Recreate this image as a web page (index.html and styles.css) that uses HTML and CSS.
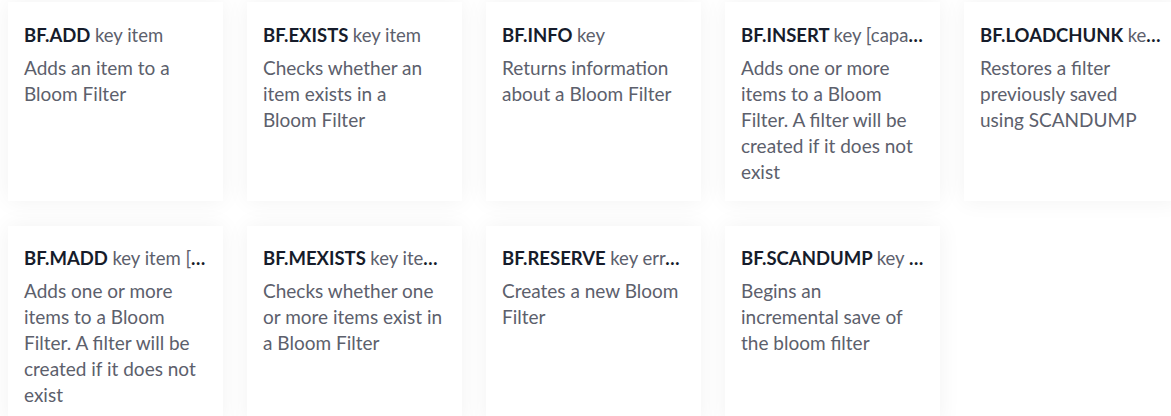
FILE: index.html
```html
<!DOCTYPE html>
<html>
<head>
<meta charset="utf-8">
<link rel="stylesheet" href="styles.css">
</head>
<body>
<div class="grid">
  <div class="card"><div class="title">BF.ADD <span class="args">key item</span></div><div class="desc">Adds an item to a Bloom Filter</div></div>
  <div class="card"><div class="title">BF.EXISTS <span class="args">key item</span></div><div class="desc">Checks whether an item exists in a Bloom Filter</div></div>
  <div class="card"><div class="title">BF.INFO <span class="args">key</span></div><div class="desc">Returns information about a Bloom Filter</div></div>
  <div class="card"><div class="title">BF.INSERT <span class="args">key [capacity] [error] [expansion] [nocreate] [nonscaling] items</span></div><div class="desc">Adds one or more items to a Bloom Filter. A filter will be created if it does not exist</div></div>
  <div class="card"><div class="title">BF.LOADCHUNK <span class="args">key iterator data</span></div><div class="desc">Restores a filter previously saved using SCANDUMP</div></div>
  <div class="card"><div class="title">BF.MADD <span class="args">key item [item ...]</span></div><div class="desc">Adds one or more items to a Bloom Filter. A filter will be created if it does not exist</div></div>
  <div class="card"><div class="title">BF.MEXISTS <span class="args">key item [item ...]</span></div><div class="desc">Checks whether one or more items exist in a Bloom Filter</div></div>
  <div class="card"><div class="title">BF.RESERVE <span class="args">key error_rate capacity [expansion] [nonscaling]</span></div><div class="desc">Creates a new Bloom Filter</div></div>
  <div class="card"><div class="title">BF.SCANDUMP <span class="args">key iterator</span></div><div class="desc">Begins an incremental save of the bloom filter</div></div>
</div>
</body>
</html>
```
FILE: styles.css
```css
html, body {
  margin: 0;
  padding: 0;
  background: #ffffff;
  overflow: hidden;
}
body {
  font-family: "Lato", "Liberation Sans", sans-serif;
}
.grid {
  display: grid;
  grid-template-columns: repeat(5, 215px);
  column-gap: 24px;
  row-gap: 25px;
  padding: 2px 0 0 8px;
  width: 1200px;
}
.card {
  background: #ffffff;
  box-shadow: 0 0 22px rgba(0, 0, 0, 0.055);
  padding: 19.5px 18px 16px 16px;
  min-width: 0;
}
.title {
  font-size: 18.5px;
  line-height: 26px;
  font-weight: 700;
  color: #161c2b;
  white-space: nowrap;
  overflow: hidden;
  text-overflow: ellipsis;
  margin-bottom: 7px;
  margin-right: -2px;
}
.args {
  font-weight: 400;
  color: #5c606c;
}
.desc {
  font-size: 19px;
  line-height: 26px;
  color: #5c606c;
}
```
